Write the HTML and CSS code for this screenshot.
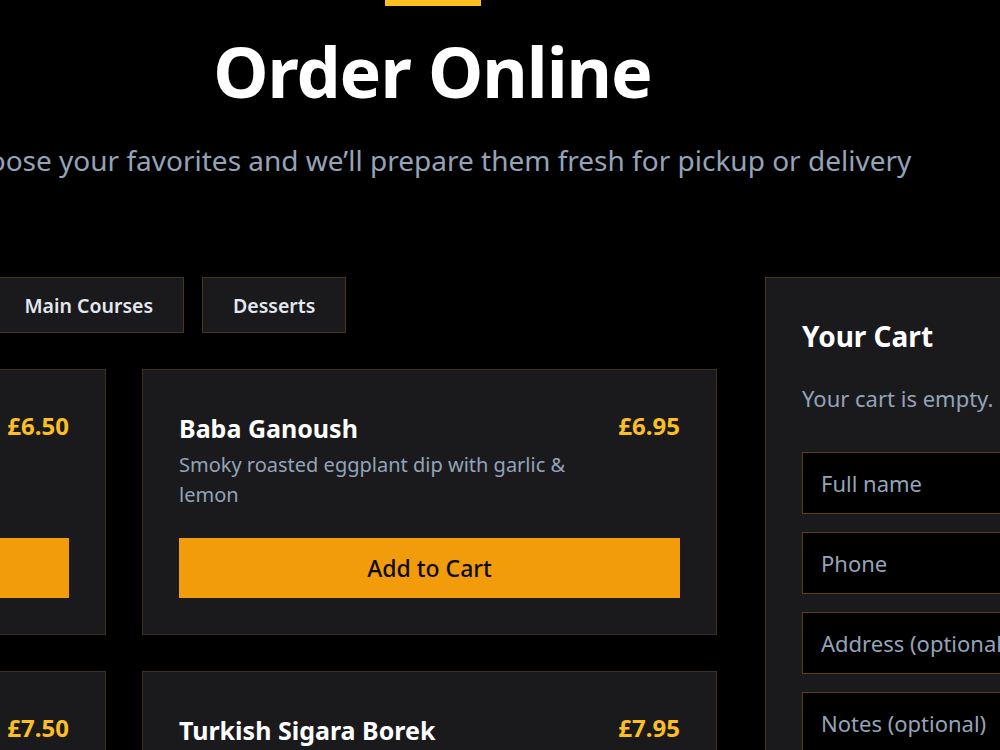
FILE: index.html
```html
<!DOCTYPE html>
<html lang="en">
<head>
<meta charset="utf-8">
<title>Order Online</title>
<link rel="stylesheet" href="styles.css">
</head>
<body>
<div class="page">
  <header class="hero">
    <div class="accent"></div>
    <h1 class="hero-title">Order Online</h1>
    <p class="hero-sub">Choose your favorites and we’ll prepare them fresh for pickup or delivery</p>
  </header>

  <main class="layout">
    <section class="menu">
      <nav class="tabs">
        <button class="tab">All</button>
        <button class="tab">Appetizers</button>
        <button class="tab">Main Courses</button>
        <button class="tab">Desserts</button>
      </nav>

      <div class="grid">
        <article class="card">
          <div class="card-head">
            <div class="card-info">
              <h3 class="card-name">Hummus</h3>
              <p class="card-desc">Creamy chickpea dip with tahini, olive oil &amp; warm pita</p>
            </div>
            <span class="card-price">£6.50</span>
          </div>
          <button class="add-btn">Add to Cart</button>
        </article>

        <article class="card">
          <div class="card-head">
            <div class="card-info">
              <h3 class="card-name">Baba Ganoush</h3>
              <p class="card-desc">Smoky roasted eggplant dip with garlic &amp; lemon</p>
            </div>
            <span class="card-price">£6.95</span>
          </div>
          <button class="add-btn">Add to Cart</button>
        </article>

        <article class="card">
          <div class="card-head">
            <div class="card-info">
              <h3 class="card-name">Falafel</h3>
              <p class="card-desc">Crispy chickpea fritters served with tahini sauce</p>
            </div>
            <span class="card-price">£7.50</span>
          </div>
          <button class="add-btn">Add to Cart</button>
        </article>

        <article class="card">
          <div class="card-head">
            <div class="card-info">
              <h3 class="card-name">Turkish Sigara Borek</h3>
              <p class="card-desc">Crispy filo rolls filled with feta cheese &amp; parsley</p>
            </div>
            <span class="card-price">£7.95</span>
          </div>
          <button class="add-btn">Add to Cart</button>
        </article>
      </div>
    </section>

    <aside class="cart">
      <h2 class="cart-title">Your Cart</h2>
      <p class="cart-empty">Your cart is empty.</p>
      <form class="cart-form">
        <input class="field" type="text" placeholder="Full name">
        <input class="field" type="text" placeholder="Phone">
        <input class="field" type="text" placeholder="Address (optional)">
        <input class="field" type="text" placeholder="Notes (optional)">
      </form>
    </aside>
  </main>
</div>
</body>
</html>
```

FILE: styles.css
```css
html, body {
  margin: 0;
  padding: 0;
  background: #000;
  overflow: hidden;
}

body {
  font-family: "Noto Sans", "Open Sans", sans-serif;
  color: #fff;
}

.page {
  width: 1803px;
  margin-left: -469px;
}

.hero {
  display: flex;
  flex-direction: column;
  align-items: center;
}

.accent {
  width: 96px;
  height: 6px;
  background: #fbbf24;
  margin-bottom: 23px;
}

.hero-title {
  margin: 0;
  font-size: 70px;
  line-height: 84px;
  font-weight: 700;
  letter-spacing: -1px;
  color: #fff;
}

.hero-sub {
  margin: 26px 0 0;
  font-size: 28px;
  line-height: 42px;
  color: #94a3b8;
}

.layout {
  margin-top: 96px;
  display: grid;
  grid-template-columns: 1186px 1fr;
  column-gap: 48px;
  align-items: start;
}

.tabs {
  display: flex;
  gap: 18px;
  margin-bottom: 36px;
  padding-left: 177px;
}

.tab {
  height: 56px;
  padding: 0 30px;
  background: #1a1a1d;
  border: 1px solid #4a3719;
  color: #e2e8f0;
  font-family: inherit;
  font-size: 19.5px;
  font-weight: 600;
  white-space: nowrap;
}

.grid {
  display: grid;
  grid-template-columns: 1fr 1fr;
  gap: 36px;
}

.card {
  background: #1a1a1d;
  border: 1px solid #3f3120;
  padding: 36px;
  display: flex;
  flex-direction: column;
}

.card-head {
  display: flex;
  justify-content: space-between;
  align-items: flex-start;
  gap: 16px;
}

.card-info {
  flex: 1;
}

.card-name {
  margin: 0;
  font-size: 25px;
  line-height: 44px;
  font-weight: 700;
  color: #fff;
}

.card-desc {
  margin: 0;
  font-size: 20px;
  line-height: 30px;
  color: #94a3b8;
}

.card-price {
  flex-shrink: 0;
  font-size: 24px;
  line-height: 40px;
  font-weight: 700;
  color: #fbbf24;
}

.add-btn {
  margin-top: 28px;
  height: 60px;
  border: none;
  background: #f39c0b;
  color: #0b0b0b;
  font-family: inherit;
  font-size: 23px;
  font-weight: 500;
}

.cart {
  background: #1a1a1d;
  border: 1px solid #4a3719;
  padding: 36px;
}

.cart-title {
  margin: 0;
  font-size: 28px;
  line-height: 44px;
  font-weight: 700;
  color: #fff;
}

.cart-empty {
  margin: 24px 0 37px;
  font-size: 22px;
  line-height: 33px;
  color: #94a3b8;
}

.cart-form {
  display: flex;
  flex-direction: column;
  gap: 18px;
}

.field {
  box-sizing: border-box;
  height: 62px;
  padding: 0 18px;
  background: #000;
  border: 1px solid #5e3f0c;
  color: #e2e8f0;
  font-family: inherit;
  font-size: 22px;
}

.field::placeholder {
  color: #94a3b8;
  opacity: 1;
}
```
